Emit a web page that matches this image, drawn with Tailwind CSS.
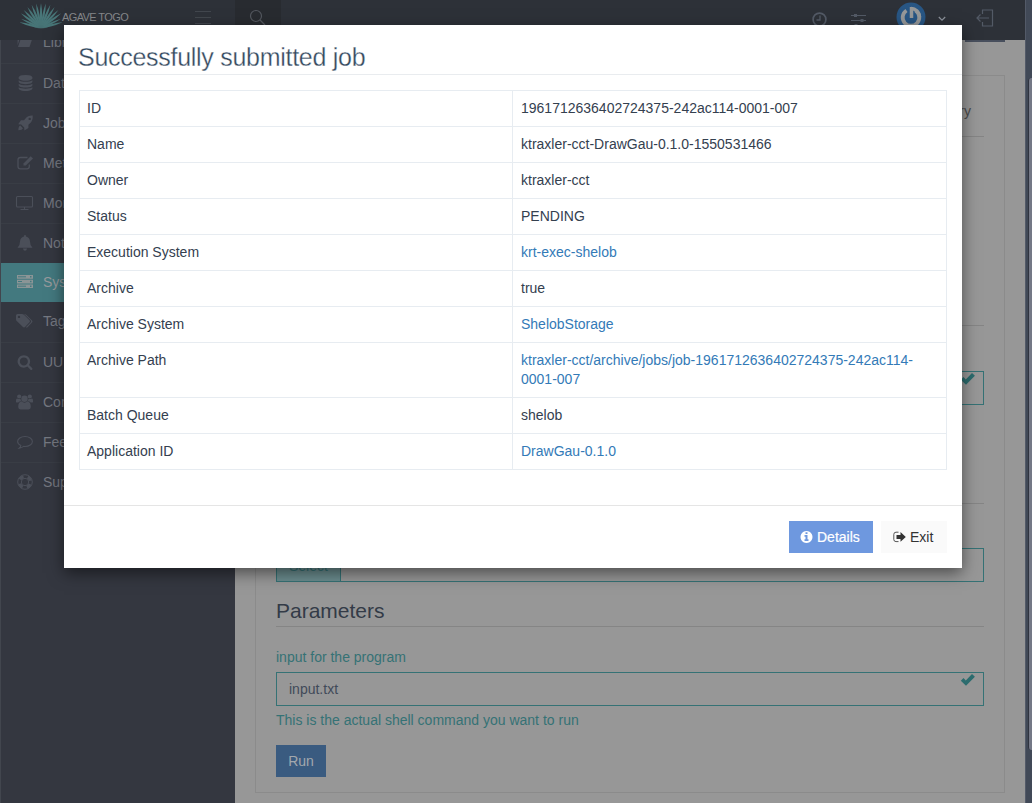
<!DOCTYPE html>
<html lang="en">
<head>
<meta charset="utf-8">
<title>Agave ToGo</title>
<script src="https://cdn.jsdelivr.net/npm/@tailwindcss/browser@4"></script>
</head>
<body class="overflow-hidden bg-[#979797] font-['Liberation_Sans',Arial,sans-serif] text-sm">
<div class="relative flex h-[803px] w-[1032px] overflow-hidden">
  <div class="flex w-[1025px] flex-col">
    <header class="flex h-10 shrink-0 items-start bg-[#2d3138]">
      <div class="flex w-[235px] items-start pl-5">
        <svg class="mt-[2px] shrink-0" width="42" height="27" viewBox="0 0 42 27" fill="#487678">
          <defs><path id="leaf" d="M21 26Q18.700 13 21 1Q23.300 13 21 26Z"/><path id="side" d="M21 26Q19 15 21 4Q23 15 21 26Z"/></defs>
          <use href="#leaf"/><use href="#leaf" transform="rotate(11 21 26)"/><use href="#leaf" transform="rotate(-11 21 26)"/>
          <use href="#leaf" transform="rotate(22 21 26)"/><use href="#leaf" transform="rotate(-22 21 26)"/>
          <use href="#leaf" transform="rotate(33 21 26)"/><use href="#leaf" transform="rotate(-33 21 26)"/>
          <use href="#leaf" transform="rotate(44 21 26)"/><use href="#leaf" transform="rotate(-44 21 26)"/>
          <use href="#leaf" transform="rotate(54 21 26)"/><use href="#leaf" transform="rotate(-54 21 26)"/>
          <use href="#side" transform="rotate(65 21 26)"/><use href="#side" transform="rotate(-65 21 26)"/>
          <use href="#side" transform="rotate(75 21 26)"/><use href="#side" transform="rotate(-75 21 26)"/>
          <path d="M9 22Q21 14 33 22Q27 26.500 21 26.500Q15 26.500 9 22Z" opacity=".6"/>
        </svg>
        <span class="mt-[11px] w-[66px] whitespace-nowrap text-[11px] leading-[13px] tracking-[-0.6px] text-[#85878a]">AGAVE TOGO</span>
        <svg class="ml-[67px] mt-[11px] shrink-0" width="16" height="14" stroke="#42474e"><path d="M0 .5h16M0 6.500h16M0 12.500h16"/></svg>
      </div>
      <div class="flex h-10 w-[46px] justify-center bg-[#282b30] pt-[9px]">
        <svg class="-ml-[2px]" width="17" height="17" fill="none" stroke="#53575e" stroke-width="1.200"><circle cx="7" cy="7" r="5.500"/><path d="M11 11l5 5"/></svg>
      </div>
      <div class="flex flex-1 items-start justify-end pr-[31px]">
        <svg class="mt-[12px]" width="16" height="16" fill="none" stroke="#535a66" stroke-width="1.700"><circle cx="7.500" cy="7.500" r="6.400"/><path d="M8 3.500v4.500H4.500" stroke-width="1.300"/></svg>
        <svg class="ml-[23px] mt-[13px]" width="16" height="14" stroke="#535a66" stroke-width="1.200"><path d="M0 2.500h15M0 7.500h15M0 12.500h15"/><path d="M4.500 1v3M11 6v3M5 11v3" stroke-width="3"/></svg>
        <svg class="ml-[29px] mt-[2px]" width="30" height="30" viewBox="0 0 30 30"><circle cx="15" cy="15" r="14.500" fill="#285684"/><path d="M10.500 8a8.300 8.300 0 1 0 9 0" transform="translate(0 .5)" fill="none" stroke="#969899" stroke-width="3.800"/><path d="M15 4v11" stroke="#285684" stroke-width="6"/><path d="M15 6.500a8.500 8.500 0 0 1 8.500 8.500" fill="none" stroke="#969899" stroke-width="3.500"/><path d="M15.500 5v11" stroke="#969899" stroke-width="3.500"/></svg>
        <svg class="ml-[12px] mt-[16px]" width="8" height="6" fill="none" stroke="#8d939c" stroke-width="1.200"><path d="M.8 1l3.200 3.200L7.200 1"/></svg>
        <svg class="ml-[30px] mt-[9px]" width="18" height="19" fill="none" stroke="#535a66" stroke-width="1.200"><path d="M6.500 5V1h10v16h-10v-4M1 9h12M4.500 5.500L1 9l3.500 3.500"/></svg>
      </div>
    </header>
    <div class="flex min-h-0 flex-1">
      <nav class="w-[235px] shrink-0 overflow-hidden border-l border-[#42464e] bg-[#343740] text-[#747880]">
        <ul class="-mt-[17px] [&>li]:pb-[2px]">
          <li class="flex h-10 items-center gap-[9px] pl-4"><svg class="shrink-0" width="17" height="16" viewBox="0 0 17 16" fill="#4b4f59"><path d="M4.500 2.500h11.500l-3.500 10.500H1z"/><path d="M.6 11V2.500Q.6 1.300 1.800 1.300h2l-3.200 10z"/></svg>Libraries</li>
          <li class="flex h-10 items-center gap-[9px] border-t border-[#393d45] pl-4"><svg class="shrink-0" width="17" height="16" viewBox="-60 0 1904 1792" fill="#4b4f59"><path d="M896 768q237 0 443-43t325-127v170q0 69-103 128t-280 93.500-385 34.500-385-34.500-280-93.500-103-128v-170q119 84 325 127t443 43zm0 768q237 0 443-43t325-127v170q0 69-103 128t-280 93.500-385 34.500-385-34.500-280-93.500-103-128v-170q119 84 325 127t443 43zm0-384q237 0 443-43t325-127v170q0 69-103 128t-280 93.500-385 34.500-385-34.500-280-93.500-103-128v-170q119 84 325 127t443 43zm0-1152q208 0 385 34.500t280 93.500 103 128v128q0 69-103 128t-280 93.500-385 34.500-385-34.500-280-93.500-103-128v-128q0-69 103-128t280-93.500 385-34.500z"/></svg>Data</li>
          <li class="flex h-10 items-center gap-[9px] border-t border-[#393d45] pl-4"><svg class="shrink-0" width="17" height="16" viewBox="0 0 17 16" fill="#4b4f59"><path fill-rule="evenodd" d="M15.700.5Q11 .2 8.300 3.800L7 5.200H3.900L1.200 9.300l3 .1 3 3 .2 3.100 4-2.600V9.700l1.400-1.200Q16.200 5.500 15.700.5zM12.700 2.700a1.200 1.200 0 1 1 0 2.400 1.200 1.200 0 0 1 0-2.400zM3.300 10.500Q1.500 11 1.300 15.200q4-.2 4.600-2z"/></svg>Jobs</li>
          <li class="flex h-10 items-center gap-[9px] border-t border-[#393d45] pl-4"><svg class="shrink-0" width="17" height="16" viewBox="0 0 17 16" fill="none" stroke="#4b4f59" stroke-width="1.300"><path d="M10.500 2.500H3.300Q1 2.500 1 4.800v6.700q0 2.300 2.300 2.300H10q2.300 0 2.300-2.300V9.500"/><path d="M6.500 10.600V8.400L13.700 1.200l2.300 2.200-7.200 7.200z" fill="#4b4f59" stroke="none"/></svg>Metadata</li>
          <li class="flex h-10 items-center gap-[9px] border-t border-[#393d45] pl-4"><svg class="-ml-px mr-px shrink-0 overflow-visible" width="17" height="16" viewBox="0 0 17 16" fill="none" stroke="#4b4f59" stroke-width="1.100"><rect x=".5" y="1.500" width="16" height="10.500" rx="1"/><path d="M8.500 12v2.500M4.500 14.500h8"/></svg>Monitors</li>
          <li class="flex h-10 items-center gap-[9px] border-t border-[#393d45] pl-4"><svg class="shrink-0" width="17" height="16" viewBox="0 0 17 16" fill="#4b4f59"><path d="M8 0q1 0 1 1.400Q12.800 2.300 13 6.500q0 4 2.500 6.200H.500Q3 10.500 3 6.500 3.200 2.300 7 1.400 7 0 8 0zM6 13.400h4q-.3 2.300-2 2.300t-2-2.300z"/></svg>Notifications</li>
          <li class="-ml-px flex h-[39px] items-center gap-[9px] bg-[#43797f] pl-[17px] text-[#979a9d]"><svg class="shrink-0" width="17" height="16" viewBox="0 0 17 16"><g fill="#8b9596"><path d="M0 1h16v3.700H0zM0 5.700h16v3.700H0zM0 10.400h16v3.700H0z"/></g><path d="M1 2.800h8M1 7.500h4M1 12.200h8" stroke="#43797f"/><path d="M13 2.800h1.500M13 7.500h1.500M13 12.200h1.500" stroke="#43797f" stroke-width="1.500"/></svg>Systems</li>
          <li class="flex h-10 items-center gap-[9px] pl-4"><svg class="-ml-px mr-px shrink-0" width="17" height="16" viewBox="0 0 17 16" fill="#4b4f59"><path fill-rule="evenodd" d="M0 2.500Q0 1 1.500 1H6q1 0 2 .8l5.500 5.500q1 1 0 2L9 14q-1 .8-2 0L1 8.200Q0 7.500 0 6.500zM3 2.700A1.200 1.200 0 1 0 3 5.100 1.200 1.200 0 0 0 3 2.700z"/><path d="M8 1q1.300 0 2.200.8l5.800 5.800q1 1 0 2l-4.700 4.800q-.8.500-1.500-.200l5-5q.6-.8 0-1.600z"/></svg>Tags</li>
          <li class="flex h-10 items-center gap-[9px] border-t border-[#393d45] pl-4"><svg class="shrink-0" width="17" height="16" viewBox="0 0 1904 1792" fill="#4b4f59"><path d="M1216 832q0-185-131.500-316.500t-316.500-131.500-316.500 131.500-131.500 316.500 131.500 316.500 316.500 131.500 316.500-131.500 131.500-316.500zm512 832q0 52-38 90t-90 38q-54 0-90-38l-343-342q-179 124-399 124-143 0-273.500-55.500t-225-150-150-225-55.500-273.500 55.500-273.500 150-225 225-150 273.500-55.500 273.500 55.500 225 150 150 225 55.500 273.500q0 220-124 399l343 343q37 37 37 90z"/></svg>UUIDs</li>
          <li class="flex h-10 items-center gap-[9px] border-t border-[#393d45] pl-4"><svg class="-ml-px mr-px shrink-0" width="17" height="16" viewBox="0 0 17 16" fill="#4b4f59"><circle cx="8.500" cy="4.800" r="3.200"/><circle cx="3.200" cy="2.500" r="2.100"/><circle cx="13.800" cy="2.500" r="2.100"/><path d="M5.500 7.300q3 2.800 6 0 3.300.7 3.300 5.800 0 2.400-2.300 2.400h-8q-2.300 0-2.300-2.400 0-5.100 3.300-5.800zM0 8V6.500Q0 4.300 1.300 4.500q1.700 1 3.200.3.100 1.400.900 2.200Q3.500 7.200 2.300 8.500 0 8.800 0 8zM17 8V6.500q0-2.200-1.300-2-1.700 1-3.200.3-.1 1.400-.9 2.200 1.900.2 3.100 1.500Q17 8.800 17 8z"/></svg>Community</li>
          <li class="flex h-10 items-center gap-[9px] border-t border-[#393d45] pl-4"><svg class="shrink-0" width="17" height="16" viewBox="0 0 17 16" fill="none" stroke="#4b4f59" stroke-width="1.100"><path d="M8 2.500c4.100 0 7.400 2.200 7.400 5s-3.300 5-7.400 5l-1.400-.1Q4.500 14 2.200 14.200 3.700 13 3.800 11.600C1.900 10.600.6 9.200.6 7.500c0-2.800 3.300-5 7.400-5z"/></svg>Feedback</li>
          <li class="flex h-10 items-center gap-[9px] border-t border-[#393d45] pl-4"><svg class="shrink-0" width="17" height="16" viewBox="0 0 17 16" fill="none" stroke="#4b4f59"><circle cx="8" cy="8" r="7.300"/><circle cx="8" cy="8" r="3.700"/><circle cx="8" cy="8" r="5.500" stroke-width="3.200" stroke-dasharray="4.300 4.340" stroke-dashoffset="-2.150"/></svg>Support</li>
        </ul>
      </nav>
      <main class="flex-1 px-5 pb-[10px]">
        <div class="flex h-[35px] justify-end"><div class="h-[2px] w-10 bg-[#484f5d]"></div></div>
        <section class="h-[718px] border border-[#8b8b8b] px-5 text-[#357275]">
          <div class="flex h-[61px] items-center justify-end border-b border-[#858585] pr-[13px] pt-[9px] text-[#4c4c4c]">Directory</div>
          <div class="h-[189px] border-b border-[#858585]"></div>
          <div class="mt-[45px] flex h-[34px] justify-end border border-[#357275] pr-[7px] pt-px"><svg width="16" height="12" viewBox="0 0 16 12" fill="#2c6c6e"><path d="M.8 6.800L3.500 4.100l2.300 2.300L12 0l2.900 2.700L6 11.800z"/></svg></div>
          <div class="mt-[43px] h-[56px] border-b border-[#858585]"></div>
          <div class="mt-[44px] flex h-[34px] border border-[#357275]"><div class="w-[64px] border-r border-[#357275] bg-[#6b8d8f] pl-3 pt-2 leading-[18px]">Select</div></div>
          <h3 class="mt-[15px] h-[30px] border-b border-[#858585] text-[21px] leading-[28px] text-[#333b47]">Parameters</h3>
          <div class="mt-[20px] leading-5">input for the program</div>
          <div class="mt-[5px] flex h-[34px] items-center justify-between border border-[#357275] pl-3 pr-[7px] text-[#414a59]"><span>input.txt</span><svg class="mb-[18px]" width="16" height="12" viewBox="0 0 16 12" fill="#2c6c6e"><path d="M.8 6.800L3.500 4.100l2.300 2.300L12 0l2.900 2.700L6 11.800z"/></svg></div>
          <div class="mt-[4px] leading-5">This is the actual shell command you want to run</div>
          <button class="mt-[15px] flex h-8 w-[50px] items-center justify-center bg-[#3a5b80] text-[#a3a8ad]">Run</button>
        </section>
      </main>
    </div>
  </div>
  <div class="flex w-[7px] flex-col border-l border-[#535a68] bg-[#414957] pl-[2px] pt-[78px]">
    <div class="h-[672px] w-2 rounded-l-[3px] border-l border-[#30343f] bg-[#747886]"></div>
  </div>

  <div role="dialog" class="absolute left-16 top-[25px] flex h-[543px] w-[898px] flex-col bg-white text-[#2f353b] shadow-[0_5px_15px_rgba(0,0,0,0.5)]">
    <h4 class="h-[50px] border-b border-[#e9ecef] pl-[14px] pt-[15px] text-[25px] leading-[34px] tracking-[-0.28px] text-[#34495e] [-webkit-text-stroke:0.3px_white]">Successfully submitted job</h4>
    <div class="h-[431px] border-b border-[#e5e5e5] px-[15px] pt-[15px]">
      <table class="w-full table-fixed border-collapse leading-[19px] text-[#34404f] [&_a]:text-[#337ab7] [&_td]:border [&_td]:border-[#e7ecf1] [&_td]:py-2 [&_td]:align-top [&_td:first-child]:w-[433px] [&_td:first-child]:pl-[7px] [&_td:last-child]:pl-2">
        <tr><td>ID</td><td>1961712636402724375-242ac114-0001-007</td></tr>
        <tr><td>Name</td><td>ktraxler-cct-DrawGau-0.1.0-1550531466</td></tr>
        <tr><td>Owner</td><td>ktraxler-cct</td></tr>
        <tr><td>Status</td><td>PENDING</td></tr>
        <tr><td>Execution System</td><td><a>krt-exec-shelob</a></td></tr>
        <tr><td>Archive</td><td>true</td></tr>
        <tr><td>Archive System</td><td><a>ShelobStorage</a></td></tr>
        <tr><td>Archive Path</td><td><a>ktraxler-cct/archive/jobs/job-1961712636402724375-242ac114-<br>0001-007</a></td></tr>
        <tr><td>Batch Queue</td><td>shelob</td></tr>
        <tr><td>Application ID</td><td><a>DrawGau-0.1.0</a></td></tr>
      </table>
    </div>
    <div class="flex justify-end gap-2 pr-[15px] pt-[15px]">
      <button class="flex h-8 w-[84px] items-center gap-[4px] bg-[#6e98df] pl-[11px] text-white [-webkit-text-stroke:0.2px_white]"><svg width="13" height="14" viewBox="64 0 1664 1792" fill="#fff"><path d="M1152 1376v-160q0-14-9-23t-23-9h-96v-512q0-14-9-23t-23-9h-320q-14 0-23 9t-9 23v160q0 14 9 23t23 9h96v320h-96q-14 0-23 9t-9 23v160q0 14 9 23t23 9h448q14 0 23-9t9-23zm-128-896v-160q0-14-9-23t-23-9h-192q-14 0-23 9t-9 23v160q0 14 9 23t23 9h192q14 0 23-9t9-23zm640 416q0 209-103 385.500t-279.500 279.500-385.500 103-385.500-103-279.500-279.500-103-385.500 103-385.500 279.500-279.500 385.500-103 385.500 103 279.500 279.500 103 385.500z"/></svg>Details</button>
      <button class="flex h-8 w-[66px] items-center gap-[4px] bg-[#fafafa] pl-3 text-[#333]"><svg width="13" height="12" viewBox="0 0 13 12"><path d="M5.500 1.200H3Q.8 1.200.8 3.400v5Q.8 10.600 3 10.600h2.500" fill="none" stroke="#555"/><path d="M3.500 3.900h4V1.100L12.800 5.900l-5.300 4.800V7.900h-4z" fill="#333"/></svg>Exit</button>
    </div>
  </div>
</div>
</body>
</html>
